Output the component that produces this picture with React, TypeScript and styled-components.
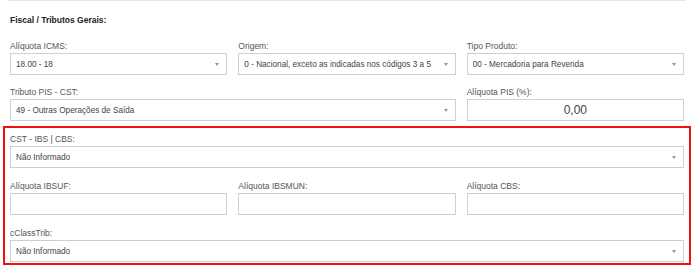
import { createGlobalStyle } from "styled-components";
import styled from "styled-components";

const GlobalStyle = createGlobalStyle`
  html, body {
    margin: 0;
    padding: 0;
    background: #ffffff;
  }
  body {
    font-family: "Liberation Sans", Arial, sans-serif;
    color: #444;
  }
`;

const Page = styled.div`
  width: 693px;
  height: 272px;
  box-sizing: border-box;
  padding: 0 9px 0 10px;
  overflow: hidden;
`;

const TopRule = styled.div`
  height: 1px;
  background: #e6e6e6;
  margin: 0 -2px;
`;

const Title = styled.h3`
  margin: 13px 0 0 0;
  height: 12px;
  line-height: 12px;
  font-size: 8.5px;
  font-weight: 700;
  color: #222;
`;

const Grid = styled.div<{ $top?: number; $gap?: number }>`
  display: grid;
  grid-template-columns: repeat(3, 1fr);
  column-gap: 11px;
  row-gap: ${(p) => p.$gap ?? 11}px;
  margin-top: ${(p) => p.$top ?? 0}px;
`;

const Highlight = styled.section`
  margin: 5px -7px 0 -7px;
  padding: 5px 5px 1px 5px;
  border: 2px solid #ee1111;
`;

const Field = styled.div<{ $span?: number }>`
  grid-column: span ${(p) => p.$span ?? 1};
  display: flex;
  flex-direction: column;
  gap: 1px;
`;

const Label = styled.label`
  height: 12px;
  line-height: 12px;
  font-size: 8.5px;
  color: #555;
`;

const Box = styled.div<{ $center?: boolean }>`
  position: relative;
  height: 22px;
  box-sizing: border-box;
  border: 1px solid #cfcfcf;
  background: #fff;
  display: flex;
  align-items: center;
  justify-content: ${(p) => (p.$center ? "center" : "flex-start")};
  padding: 0 5px;
  font-size: ${(p) => (p.$center ? "12px" : "8.2px")};
  color: #444;
  white-space: nowrap;
`;

const Arrow = styled.span`
  position: absolute;
  right: 7px;
  top: 9px;
  width: 0;
  height: 0;
  border-left: 2.5px solid transparent;
  border-right: 2.5px solid transparent;
  border-top: 3px solid #999;
`;

function Select({ value }: { value: string }) {
  return (
    <Box>
      {value}
      <Arrow />
    </Box>
  );
}

export default function App() {
  return (
    <Page>
      <GlobalStyle />
      <TopRule />
      <Title>Fiscal / Tributos Gerais:</Title>
      <Grid $top={14}>
        <Field>
          <Label>Alíquota ICMS:</Label>
          <Select value="18.00 - 18" />
        </Field>
        <Field>
          <Label>Origem:</Label>
          <Select value="0 - Nacional, exceto as indicadas nos códigos 3 a 5" />
        </Field>
        <Field>
          <Label>Tipo Produto:</Label>
          <Select value="00 - Mercadoria para Revenda" />
        </Field>
        <Field $span={2}>
          <Label>Tributo PIS - CST:</Label>
          <Select value="49 - Outras Operações de Saída" />
        </Field>
        <Field>
          <Label>Alíquota PIS (%):</Label>
          <Box $center>0,00</Box>
        </Field>
      </Grid>
      <Highlight>
        <Grid $gap={12}>
          <Field $span={3}>
            <Label>CST - IBS | CBS:</Label>
            <Select value="Não Informado" />
          </Field>
          <Field>
            <Label>Alíquota IBSUF:</Label>
            <Box />
          </Field>
          <Field>
            <Label>Alíquota IBSMUN:</Label>
            <Box />
          </Field>
          <Field>
            <Label>Alíquota CBS:</Label>
            <Box />
          </Field>
          <Field $span={3}>
            <Label>cClassTrib:</Label>
            <Select value="Não Informado" />
          </Field>
        </Grid>
      </Highlight>
    </Page>
  );
}
